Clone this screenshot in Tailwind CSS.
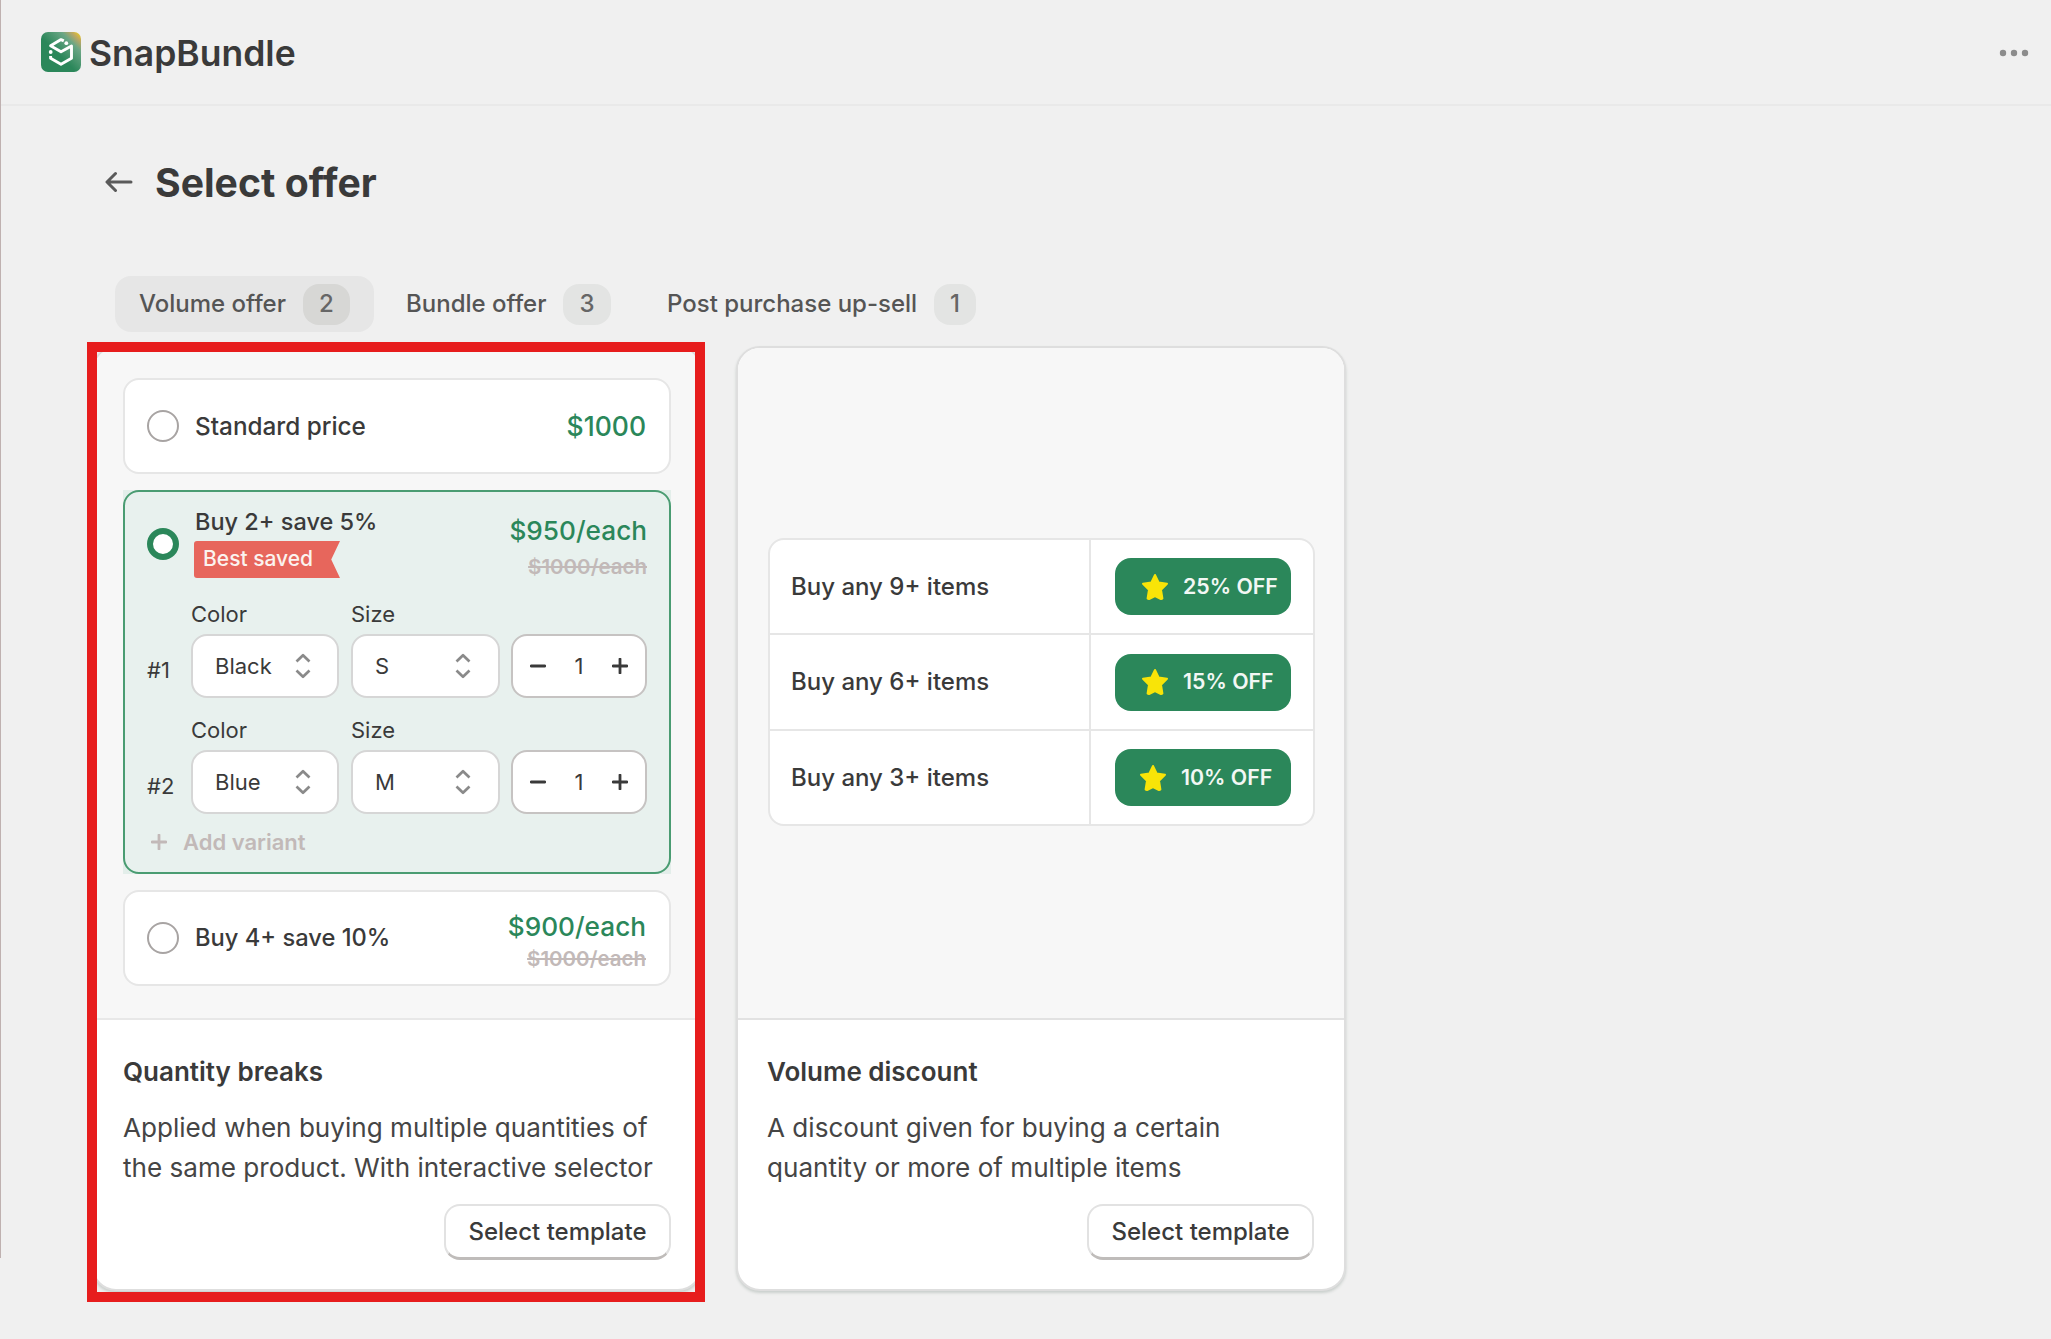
<!DOCTYPE html>
<html lang="en">
<head>
<meta charset="utf-8">
<title>SnapBundle - Select offer</title>
<script src="https://cdn.jsdelivr.net/npm/@tailwindcss/browser@4"></script>
</head>
<body class="bg-[#f0f0f0]">
<svg class="hidden">
  <symbol id="updown" viewBox="0 0 16 26"><path d="M1.500 8.500 8 2.200l6.500 6.300M1.500 17.500 8 23.800l6.500-6.300" fill="none" stroke="#8a8a8a" stroke-width="2.700" stroke-linejoin="round"/></symbol>
  <symbol id="plus" viewBox="0 0 16 16"><path d="M8 1v14M1 8h14" fill="none" stroke="currentColor" stroke-width="2.800" stroke-linecap="round"/></symbol>
  <symbol id="minus" viewBox="0 0 16 16"><path d="M1.200 8h13.600" fill="none" stroke="currentColor" stroke-width="2.800" stroke-linecap="round"/></symbol>
  <symbol id="star" viewBox="0 0 28 28"><path d="M14 2l3.600 7.500 8.400 1.200-6 6 1.400 8.800-1.400.5L14 23l-6 3-1.400-.5L8 16.700l-6-6 8.400-1.200z" fill="#f8e408" stroke="#f8e408" stroke-width="2" stroke-linejoin="round"/></symbol>
</svg>
<div class="relative h-[1339px] w-[2051px] overflow-hidden bg-[#f0f0f0] font-['Inter',sans-serif] text-[#3a3a3a]">
  <div class="absolute left-0 top-0 h-[1258px] w-px bg-[#bfb1b0]"></div>

  <header class="flex h-[106px] items-center justify-between border-b-2 border-[#e9e9e9] pl-[41px] pr-[22px]">
    <div class="flex items-center gap-2">
      <svg class="size-10" viewBox="0 0 40 40">
        <defs>
          <linearGradient id="lg" x1="0.300" y1="0.700" x2="1" y2="0"><stop offset="0.200" stop-color="#2b875a"/><stop offset="0.650" stop-color="#6ba685"/><stop offset="0.820" stop-color="#b9a765"/><stop offset="1" stop-color="#fbd20c"/></linearGradient>
        </defs>
        <rect width="40" height="40" rx="7" fill="url(#lg)"/>
        <path d="M22.800 8.900 20 7.600 9.600 13.800 20 19.800 30.500 14V26.300L20 32.200 9.600 26.300V24" fill="none" stroke="#fff" stroke-width="2.900" stroke-linejoin="round"/>
        <circle cx="9.700" cy="20" r="1.900" fill="#fff"/><circle cx="25.300" cy="11.200" r="1.900" fill="#fff"/>
      </svg>
      <span class="mt-1 whitespace-nowrap text-[35.500px] font-semibold leading-10">SnapBundle</span>
    </div>
    <svg class="mt-[2px] h-[8px] w-[30px]" viewBox="0 0 30 8" fill="#8c8c8c"><circle cx="4" cy="4" r="3.200"/><circle cx="15" cy="4" r="3.200"/><circle cx="26" cy="4" r="3.200"/></svg>
  </header>

  <div class="mt-[52px] flex h-12 items-center pl-[105px]">
    <svg class="h-[22px] w-7" viewBox="0 0 28 22"><path d="M26 11H3M10.500 2.500 2 11l8.500 8.500" fill="none" stroke="#5a5a5a" stroke-width="3" stroke-linecap="round" stroke-linejoin="round"/></svg>
    <h1 class="ml-[22px] mt-[2px] whitespace-nowrap text-[39.200px] font-[660] leading-12">Select offer</h1>
  </div>

  <nav class="mt-[70px] flex h-14 gap-[7px] pl-[115px] text-[24px] font-medium text-[#555555]">
    <div class="flex items-center gap-4 rounded-2xl bg-[#e6e6e6] pl-6 pr-6"><span class="w-[148px] whitespace-nowrap">Volume offer</span><span class="flex h-[41px] w-[47px] items-center justify-center rounded-2xl bg-[#d7d7d5] text-[#666666]">2</span></div>
    <div class="flex items-center gap-4 pl-[25px] pr-6"><span class="w-[141px] whitespace-nowrap">Bundle offer</span><span class="flex h-[41px] w-[48px] items-center justify-center rounded-2xl bg-[#e3e4e3] text-[#666666]">3</span></div>
    <div class="flex items-center gap-4 pl-[25px] pr-6"><span class="w-[251px] whitespace-nowrap">Post purchase up-sell</span><span class="flex h-[41px] w-[42px] items-center justify-center rounded-2xl bg-[#e3e4e3] text-[#666666]">1</span></div>
  </nav>

  <main class="mt-[14px] flex gap-[34px] pl-[92px]">
    <section class="relative h-[945px] w-[610px]">
      <div class="flex h-full flex-col overflow-hidden rounded-[24px] border-2 border-[#dedede] bg-white shadow-[0_2px_3px_#c9cfcc]">
        <div class="flex h-[672px] shrink-0 flex-col gap-4 border-b-2 border-[#e8e8e8] bg-[#f7f7f7] pl-[29px] pt-[30px]">
          <div class="flex h-[96px] w-[548px] items-center rounded-2xl border-2 border-[#e6e6e6] bg-white pl-[22px] pr-[23px]">
            <span class="size-8 rounded-full border-2 border-[#a8a4a3]"></span>
            <span class="ml-4 whitespace-nowrap text-[24.300px] font-medium">Standard price</span>
            <span class="ml-auto mt-px whitespace-nowrap text-[26.500px] font-medium text-[#2b875a]">$1000</span>
          </div>
          <div class="h-[384px] w-[548px] bg-[#e3eeea]">
            <div class="flex h-full flex-col rounded-2xl border-2 border-[#4a9c72] bg-[#e8f1ee] pl-[22px] pr-[22px]">
              <div class="flex h-[105px]">
                <span class="mt-9 size-8 rounded-full border-[6px] border-[#2b875a] bg-white"></span>
                <div class="ml-[15px] pt-4">
                  <div class="h-[33px] whitespace-nowrap pl-px text-[23.500px] font-medium leading-7">Buy 2+ save 5%</div>
                  <div class="flex h-[37px] w-[146px] items-center rounded-l-[3px] bg-[#e7665c] pb-px pl-[9px] text-[21px] font-medium text-[#fbf3ef] [clip-path:polygon(0_0,100%_0,94%_50%,100%_100%,0_100%)]"><span class="whitespace-nowrap">Best saved</span></div>
                </div>
                <div class="ml-auto flex flex-col items-end pt-[22px]">
                  <span class="whitespace-nowrap text-[26.200px] font-medium leading-[34px] text-[#2b875a]">$950/each</span>
                  <span class="mt-[2px] whitespace-nowrap text-[20.500px] font-semibold leading-[34px] text-[#c2b9b8] line-through">$1000/each</span>
                </div>
              </div>
              <div class="flex h-[116px] pt-[5px] text-[22px]">
                <span class="mt-12 w-[44px] leading-[40px]">#1</span>
                <div class="w-[148px]"><div class="h-[32px] leading-[24px]">Color</div>
                  <div class="flex h-16 items-center justify-between rounded-2xl border-2 border-[#d6d6d6] bg-white pl-[22px] pr-[26px]"><span>Black</span><svg class="h-[26px] w-4"><use href="#updown"/></svg></div></div>
                <div class="ml-3 w-[149px]"><div class="h-[32px] leading-[24px]">Size</div>
                  <div class="flex h-16 items-center justify-between rounded-2xl border-2 border-[#d6d6d6] bg-white pl-[22px] pr-[27px]"><span>S</span><svg class="h-[26px] w-4"><use href="#updown"/></svg></div></div>
                <div class="ml-auto mt-8 flex h-16 w-[136px] items-center justify-between rounded-2xl border-2 border-[#c6c3c2] bg-white px-[17px]"><svg class="size-4"><use href="#minus"/></svg><span>1</span><svg class="size-4"><use href="#plus"/></svg></div>
              </div>
              <div class="flex h-[116px] pt-[5px] text-[22px]">
                <span class="mt-12 w-[44px] leading-[40px]">#2</span>
                <div class="w-[148px]"><div class="h-[32px] leading-[24px]">Color</div>
                  <div class="flex h-16 items-center justify-between rounded-2xl border-2 border-[#d6d6d6] bg-white pl-[22px] pr-[26px]"><span>Blue</span><svg class="h-[26px] w-4"><use href="#updown"/></svg></div></div>
                <div class="ml-3 w-[149px]"><div class="h-[32px] leading-[24px]">Size</div>
                  <div class="flex h-16 items-center justify-between rounded-2xl border-2 border-[#d6d6d6] bg-white pl-[22px] pr-[27px]"><span>M</span><svg class="h-[26px] w-4"><use href="#updown"/></svg></div></div>
                <div class="ml-auto mt-8 flex h-16 w-[136px] items-center justify-between rounded-2xl border-2 border-[#c6c3c2] bg-white px-[17px]"><svg class="size-4"><use href="#minus"/></svg><span>1</span><svg class="size-4"><use href="#plus"/></svg></div>
              </div>
              <div class="mt-[-1px] flex h-7 items-center gap-4 pl-1 text-[22px] font-semibold text-[#c2b9b8]"><svg class="size-4"><use href="#plus"/></svg><span class="whitespace-nowrap">Add variant</span></div>
            </div>
          </div>
          <div class="flex h-[96px] w-[548px] items-center rounded-2xl border-2 border-[#e6e6e6] bg-white pl-[22px] pr-[23px]">
            <span class="size-8 rounded-full border-2 border-[#a8a4a3]"></span>
            <span class="ml-4 whitespace-nowrap text-[23.700px] font-medium">Buy 4+ save 10%</span>
            <div class="ml-auto mt-[10px] flex flex-col items-end">
              <span class="whitespace-nowrap text-[26.200px] font-medium leading-8 text-[#2b875a]">$900/each</span>
              <span class="whitespace-nowrap text-[20.500px] font-semibold leading-8 text-[#c2b9b8] line-through">$1000/each</span>
            </div>
          </div>
        </div>
        <div class="flex flex-1 flex-col px-[29px] pt-[36px]">
          <h2 class="text-[26px] font-semibold leading-8">Quantity breaks</h2>
          <p class="mt-5 whitespace-nowrap text-[26.100px] leading-10 text-[#454545]">Applied when buying multiple quantities of<br>the same product. With interactive selector</p>
          <button class="mt-4 flex h-14 w-[227px] items-center justify-center self-end rounded-2xl border-2 border-b-[3px] border-[#e2e2e2] border-b-[#bfbcba] bg-white text-[24px] font-medium"><span class="whitespace-nowrap">Select template</span></button>
        </div>
      </div>
      <div class="absolute -left-[5px] -top-1 h-[960px] w-[618px] border-10 border-[#e71d1d]"></div>
    </section>

    <section class="flex h-[945px] w-[610px] flex-col overflow-hidden rounded-[24px] border-2 border-[#dedede] bg-white shadow-[0_2px_3px_#c9cfcc]">
      <div class="flex h-[672px] shrink-0 flex-col border-b-2 border-[#e2e2e2] bg-[#f7f7f7] pl-[30px] pt-[190px]">
        <div class="grid h-[288px] w-[547px] grid-rows-[95px_96px_93px] divide-y-2 divide-[#e6e6e6] overflow-hidden rounded-2xl border-2 border-[#e6e6e6] bg-white">
          <div class="flex"><div class="flex w-[321px] items-center border-r-2 border-[#e6e6e6] pl-[21px] text-[24px] font-medium"><span class="whitespace-nowrap">Buy any 9+ items</span></div><div class="flex flex-1 items-center pl-6"><div class="flex h-[57px] w-[176px] items-center rounded-2xl bg-[#2b875a] pl-[26px] text-[21.300px] font-semibold text-[#f2f7f4]"><svg class="size-7"><use href="#star"/></svg><span class="ml-[14px] whitespace-nowrap">25% OFF</span></div></div></div>
          <div class="flex"><div class="flex w-[321px] items-center border-r-2 border-[#e6e6e6] pl-[21px] text-[24px] font-medium"><span class="whitespace-nowrap">Buy any 6+ items</span></div><div class="flex flex-1 items-center pl-6"><div class="flex h-[57px] w-[176px] items-center rounded-2xl bg-[#2b875a] pl-[26px] text-[21.300px] font-semibold text-[#f2f7f4]"><svg class="size-7"><use href="#star"/></svg><span class="ml-[14px] whitespace-nowrap">15% OFF</span></div></div></div>
          <div class="flex"><div class="flex w-[321px] items-center border-r-2 border-[#e6e6e6] pl-[21px] text-[24px] font-medium"><span class="whitespace-nowrap">Buy any 3+ items</span></div><div class="flex flex-1 items-center pl-6"><div class="flex h-[57px] w-[176px] items-center rounded-2xl bg-[#2b875a] pl-[24px] text-[21.300px] font-semibold text-[#f2f7f4]"><svg class="size-7"><use href="#star"/></svg><span class="ml-[14px] whitespace-nowrap">10% OFF</span></div></div></div>
        </div>
      </div>
      <div class="flex flex-1 flex-col pl-[29px] pr-[30px] pt-[36px]">
        <h2 class="text-[26px] font-semibold leading-8">Volume discount</h2>
        <p class="mt-5 whitespace-nowrap text-[26.100px] leading-10 text-[#454545]">A discount given for buying a certain<br>quantity or more of multiple items</p>
        <button class="mt-4 flex h-14 w-[227px] items-center justify-center self-end rounded-2xl border-2 border-b-[3px] border-[#e2e2e2] border-b-[#bfbcba] bg-white text-[24px] font-medium"><span class="whitespace-nowrap">Select template</span></button>
      </div>
    </section>
  </main>
</div>
</body>
</html>
